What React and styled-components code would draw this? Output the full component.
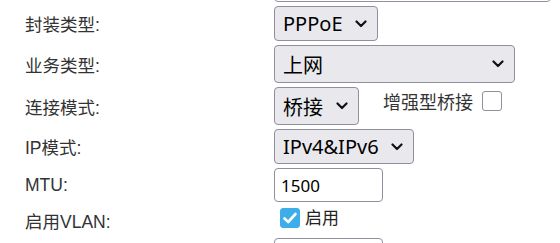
import React from "react";
import styled, { createGlobalStyle } from "styled-components";

const GlobalStyle = createGlobalStyle`
    body {
        margin: 0;
        background: #fff;
        font-family: "Liberation Sans", "Noto Sans CJK SC", sans-serif;
    }
`;

const Form = styled.div`
    display: grid;
    grid-template-columns: 249px 1fr;
    row-gap: 4px;
    align-items: center;
    padding-left: 25px;
    margin-top: -32px;
`;

const Label = styled.div`
    font-size: 17.5px;
    color: #333;
`;

const Field = styled.div`
    display: flex;
    align-items: center;
`;

const Select = styled.div`
    display: flex;
    align-items: center;
    justify-content: space-between;
    box-sizing: border-box;
    width: ${props => props.width}px;
    height: ${props => props.height}px;
    padding: 0 10px 0 8px;
    background: #e9e9ed;
    border: 1px solid #8f8f9d;
    border-radius: 4px;
    font-family: "Noto Sans", "Noto Sans CJK SC", sans-serif;
    font-size: 20px;
    color: #000;
`;

const Input = styled.div`
    display: flex;
    align-items: center;
    box-sizing: border-box;
    width: ${props => props.width}px;
    height: 34px;
    padding: 0 6px;
    background: #fff;
    border: 1px solid #8f8f9d;
    border-radius: 4px;
    font-family: "Noto Sans", "Noto Sans CJK SC", sans-serif;
    font-size: 17px;
    color: #000;
`;

const Extra = styled.span`
    margin-left: 24px;
    margin-top: -10px;
    font-family: "Noto Sans", "Noto Sans CJK SC", sans-serif;
    font-size: 18px;
    color: #333;
`;

const Box = styled.span`
    display: inline-flex;
    flex-shrink: 0;
    align-items: center;
    justify-content: center;
    box-sizing: border-box;
    width: 20px;
    height: 20px;
    border-radius: 3px;
    border: 1px solid ${props => (props.checked ? "#3daee9" : "#8f8f9d")};
    background: ${props => (props.checked ? "#3daee9" : "#fff")};
`;

const CheckRow = styled.div`
    display: flex;
    align-items: center;
    gap: 5px;
    padding: 2px 0 6px 6px;
    line-height: 20px;
    font-family: "Noto Sans", "Noto Sans CJK SC", sans-serif;
    font-size: 17px;
    color: #222;
`;

const ExtraBox = styled(Box)`
    margin-left: 9px;
    margin-top: -11px;
`;

const Chevron = () => (
    <svg width="12" height="8" viewBox="0 0 12 8">
        <path d="M1.5 1.5 L6 6 L10.5 1.5" fill="none" stroke="#111" strokeWidth="2.2" strokeLinecap="round" strokeLinejoin="round" />
    </svg>
);

const Tick = () => (
    <svg width="16" height="14" viewBox="0 0 16 14">
        <path d="M2.5 7.5 L6.2 11 L13.5 3" fill="none" stroke="#fff" strokeWidth="2.6" strokeLinecap="round" strokeLinejoin="round" />
    </svg>
);

const Dropdown = ({ value, width, height }) => (
    <Select width={width} height={height}>
        <span>{value}</span>
        <Chevron />
    </Select>
);

export default function App() {
    return (
        <>
            <GlobalStyle />
            <Form>
                <Label />
                <Field>
                    <Input width={277} />
                </Field>

                <Label>封装类型:</Label>
                <Field>
                    <Dropdown value="PPPoE" width={104} height={35} />
                </Field>

                <Label>业务类型:</Label>
                <Field>
                    <Dropdown value="上网" width={241} height={38} />
                </Field>

                <Label>连接模式:</Label>
                <Field>
                    <Dropdown value="桥接" width={85} height={38} />
                    <Extra>增强型桥接</Extra>
                    <ExtraBox />
                </Field>

                <Label>IP模式:</Label>
                <Field>
                    <Dropdown value="IPv4&IPv6" width={140} height={35} />
                </Field>

                <Label>MTU:</Label>
                <Field>
                    <Input width={109}>1500</Input>
                </Field>

                <Label>启用VLAN:</Label>
                <Field>
                    <CheckRow>
                        <Box checked>
                            <Tick />
                        </Box>
                        启用
                    </CheckRow>
                </Field>

                <Label />
                <Field>
                    <Input width={109} />
                </Field>
            </Form>
        </>
    );
}
